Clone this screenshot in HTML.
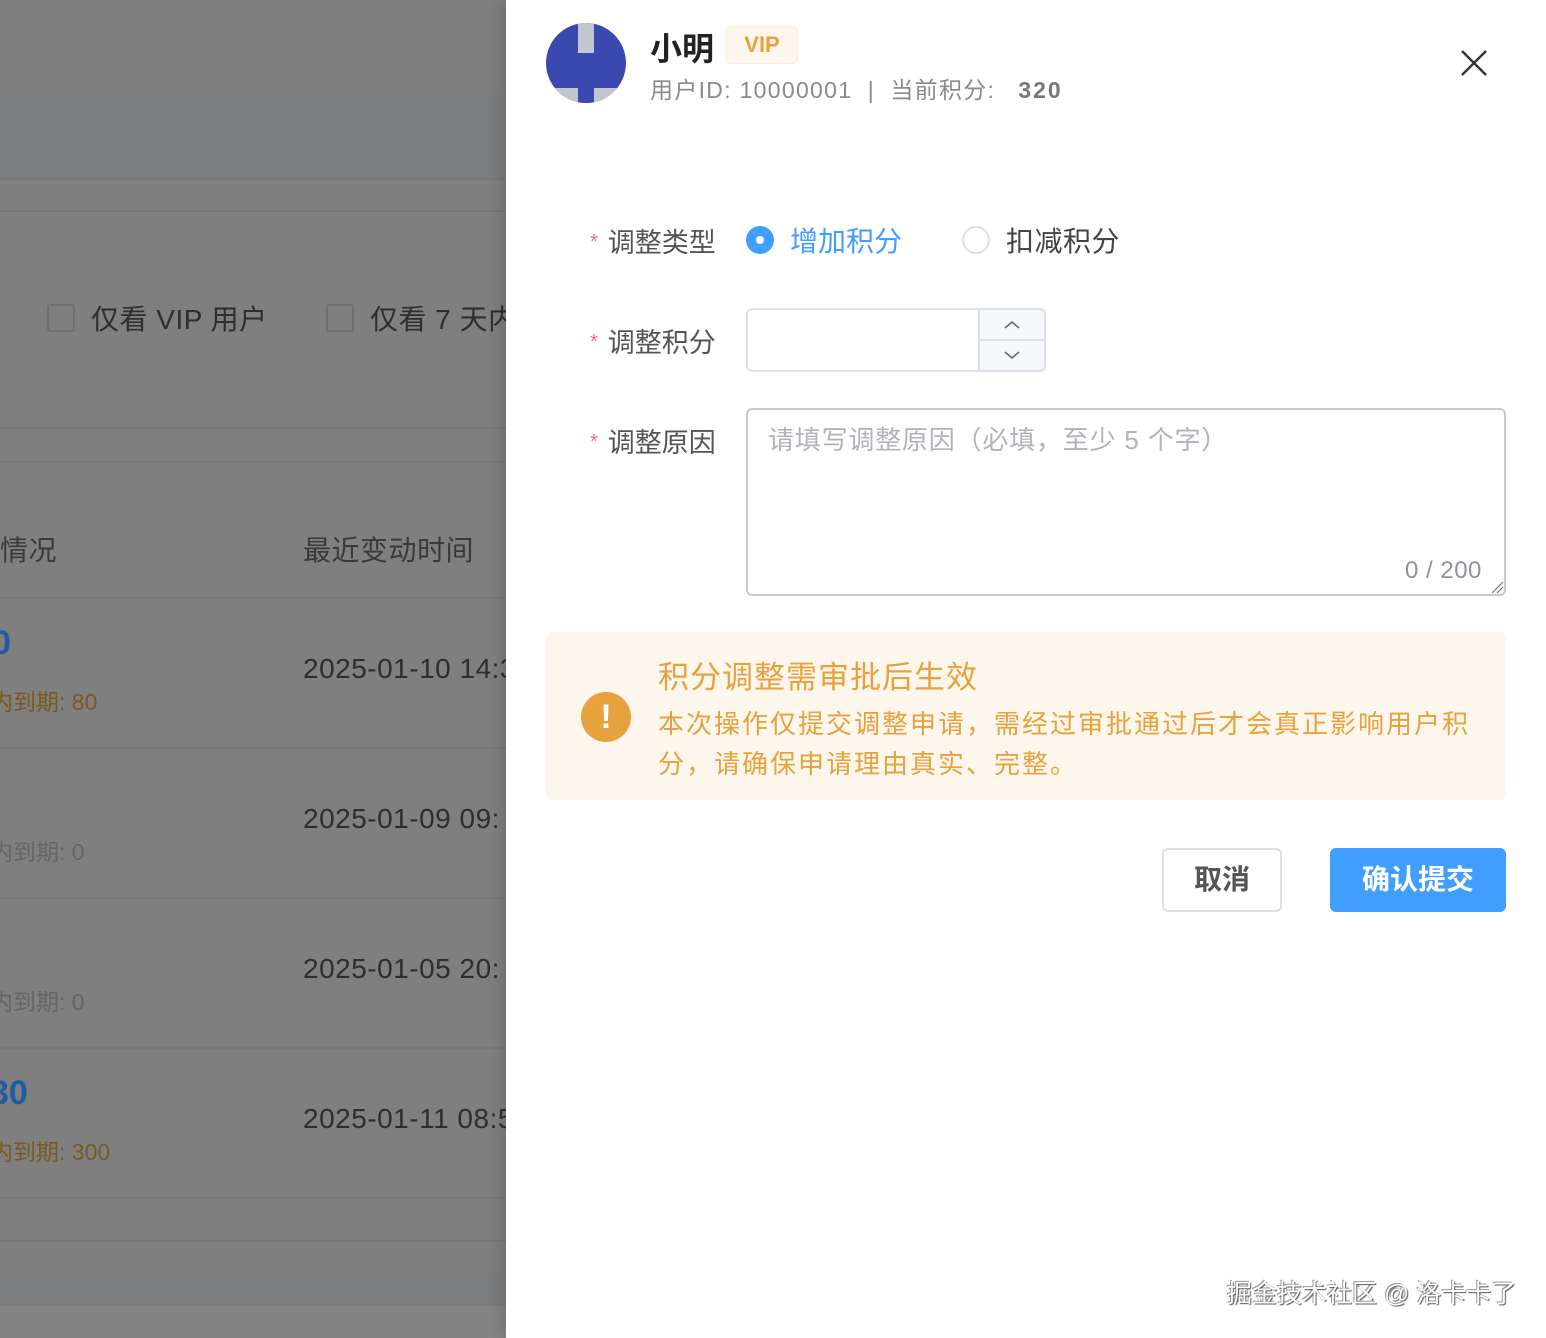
<!DOCTYPE html>
<html><head><meta charset="utf-8"><style>
*{margin:0;padding:0;box-sizing:border-box}
body{width:1546px;height:1338px;position:relative;overflow:hidden;font-family:"Liberation Sans","Noto Sans CJK SC",sans-serif;background:#7f7f7f}
.a{position:absolute;white-space:nowrap}
.l{position:absolute;left:0;width:506px;height:2px;background:#777879}
.d{color:#2e2e2e;font-size:28px;letter-spacing:.5px}
.lab{position:absolute;left:590px;font-size:27px;color:#555}
.lab b{color:#f56c6c;font-weight:normal;font-size:20px;margin-right:10px;vertical-align:4px}
</style></head><body>
<div class="a" style="left:0;top:95px;width:506px;height:83px;background:#7b7c7e"></div>
<div class="l" style="top:178px"></div><div class="l" style="top:210px"></div>
<div class="l" style="top:427px"></div><div class="l" style="top:461px"></div>
<div class="l" style="top:597px"></div><div class="l" style="top:747px"></div>
<div class="l" style="top:897px"></div><div class="l" style="top:1047px"></div>
<div class="l" style="top:1197px"></div><div class="l" style="top:1240px"></div>
<div class="a" style="left:0;top:1272px;width:506px;height:34px;background:#7b7c7e"></div>
<div class="a" style="left:0;top:1306px;width:506px;height:32px;background:#848484"></div>
<div class="a" style="left:47px;top:304px;width:28px;height:28px;border:2px solid #6f6f6f;border-radius:3px"></div>
<div class="a d" style="left:91px;top:298px">仅看 VIP 用户</div>
<div class="a" style="left:326px;top:304px;width:28px;height:28px;border:2px solid #6f6f6f;border-radius:3px"></div>
<div class="a d" style="left:370px;top:298px">仅看 7 天内</div>
<div class="a d" style="left:0;top:529px;color:#3a3a3a">情况</div>
<div class="a d" style="left:303px;top:529px;color:#3a3a3a">最近变动时间</div>
<div class="a" style="left:-8px;top:624px;font-size:34px;font-weight:bold;color:#1f5da0">0</div>
<div class="a" style="left:-10px;top:683px;font-size:23px;color:#7a5a20">内到期: 80</div>
<div class="a d" style="left:303px;top:653px">2025-01-10 14:3</div>
<div class="a" style="left:-10px;top:833px;font-size:23px;color:#666">内到期: 0</div>
<div class="a d" style="left:303px;top:803px">2025-01-09 09:</div>
<div class="a" style="left:-10px;top:983px;font-size:23px;color:#666">内到期: 0</div>
<div class="a d" style="left:303px;top:953px">2025-01-05 20:</div>
<div class="a" style="left:-10px;top:1074px;font-size:34px;font-weight:bold;color:#1f5da0">30</div>
<div class="a" style="left:-10px;top:1133px;font-size:23px;color:#7a5a20">内到期: 300</div>
<div class="a d" style="left:303px;top:1103px">2025-01-11 08:5</div>

<div class="a" style="left:506px;top:0;width:1040px;height:1338px;background:#fff;box-shadow:-6px 0 12px rgba(0,0,0,.12)"></div>
<svg class="a" style="left:546px;top:23px" width="80" height="80" viewBox="0 0 80 80"><defs><clipPath id="c"><circle cx="40" cy="40" r="40"/></clipPath></defs><g clip-path="url(#c)"><rect width="80" height="80" fill="#3a48b0"/><rect x="32" y="0" width="16" height="30" fill="#c3c6cf"/><rect x="0" y="65" width="80" height="15" fill="#c3c6cf"/><rect x="32" y="60" width="16" height="20" fill="#3a48b0"/></g></svg>
<div class="a" style="left:650px;top:24px;font-size:32px;font-weight:bold;color:#222">小明</div>
<div class="a" style="left:726px;top:26px;width:72px;height:38px;background:#fdf6ec;border:1px solid #faecd8;border-radius:5px;color:#e6a23c;font-size:22px;font-weight:bold;text-align:center;line-height:36px">VIP</div>
<div class="a" style="left:650px;top:71px;font-size:23px;color:#8a8a8a;letter-spacing:1.3px">用户ID: 10000001 &nbsp;| &nbsp;当前积分: &nbsp;&nbsp;<b style="color:#777;letter-spacing:2px">320</b></div>
<svg class="a" style="left:1460px;top:49px" width="28" height="28" viewBox="0 0 28 28"><path d="M2 2L26 26M26 2L2 26" stroke="#333" stroke-width="2.4"/></svg>

<div class="lab" style="top:221px"><b>*</b>调整类型</div>
<div class="a" style="left:746px;top:226px;width:28px;height:28px;border-radius:50%;background:#409eff"></div>
<div class="a" style="left:756px;top:236px;width:8px;height:8px;border-radius:50%;background:#fff"></div>
<div class="a" style="left:790px;top:220px;font-size:28px;color:#409eff">增加积分</div>
<div class="a" style="left:962px;top:226px;width:28px;height:28px;border-radius:50%;border:2px solid #dcdfe6"></div>
<div class="a" style="left:1006px;top:220px;font-size:28px;color:#444;letter-spacing:.5px">扣减积分</div>

<div class="lab" style="top:321px"><b>*</b>调整积分</div>
<div class="a" style="left:746px;top:308px;width:300px;height:64px;border:2px solid #dcdfe6;border-radius:6px;overflow:hidden">
<div class="a" style="left:230px;top:0;width:68px;height:60px;background:#f5f7fa;border-left:2px solid #dcdfe6"></div>
<div class="a" style="left:230px;top:29px;width:68px;height:2px;background:#dcdfe6"></div>
<svg class="a" style="left:256px;top:10px" width="16" height="10"><path d="M1 8L8 2L15 8" fill="none" stroke="#666" stroke-width="1.5"/></svg>
<svg class="a" style="left:256px;top:40px" width="16" height="10"><path d="M1 2L8 8L15 2" fill="none" stroke="#666" stroke-width="1.5"/></svg>
</div>

<div class="lab" style="top:421px"><b>*</b>调整原因</div>
<div class="a" style="left:746px;top:408px;width:760px;height:188px;border:2px solid #c8cad0;border-radius:6px"></div>
<div class="a" style="left:768px;top:420px;font-size:26px;color:#b0b3b8;letter-spacing:.8px">请填写调整原因（必填，至少 5 个字）</div>
<div class="a" style="left:1405px;top:557px;font-size:24px;color:#909399;letter-spacing:.5px">0 / 200</div>
<svg class="a" style="left:1490px;top:580px" width="14" height="14"><path d="M2 13L13 2M7 13L13 7" stroke="#777" stroke-width="1.2"/></svg>

<div class="a" style="left:546px;top:632px;width:960px;height:168px;background:#fdf6ec;border-radius:6px"></div>
<div class="a" style="left:581px;top:692px;width:50px;height:50px;border-radius:50%;background:#e6a23c;color:#fff;font-size:34px;font-weight:bold;text-align:center;line-height:50px">!</div>
<div class="a" style="left:658px;top:652px;font-size:31px;color:#e6a23c;letter-spacing:1px">积分调整需审批后生效</div>
<div class="a" style="left:658px;top:704px;font-size:26px;color:#e6a23c;line-height:40px;white-space:normal;width:830px;letter-spacing:2px">本次操作仅提交调整申请，需经过审批通过后才会真正影响用户积分，请确保申请理由真实、完整。</div>

<div class="a" style="left:1162px;top:848px;width:120px;height:64px;border:2px solid #dcdfe6;border-radius:6px;font-size:28px;color:#555;text-align:center;line-height:60px;font-weight:bold">取消</div>
<div class="a" style="left:1330px;top:848px;width:176px;height:64px;background:#409eff;border-radius:6px;font-size:28px;color:#fff;text-align:center;line-height:64px;font-weight:bold">确认提交</div>

<div class="a" style="left:1227px;top:1274px;font-size:25px;color:#fff;text-shadow:1px 1px 1px #555,-1px -1px 0 #999">掘金技术社区 @ 洛卡卡了</div>
</body></html>
